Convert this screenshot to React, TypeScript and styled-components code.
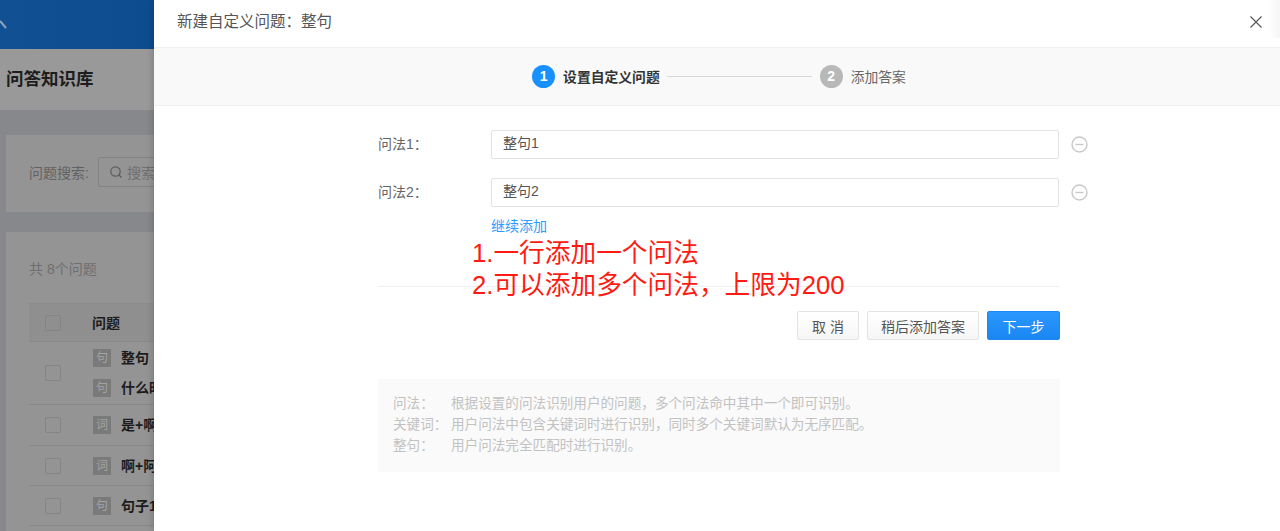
import React from 'react'
import styled, { createGlobalStyle } from 'styled-components'

const GlobalStyle = createGlobalStyle`
  html, body {
    margin: 0;
    padding: 0;
    background: #fff;
  }
  body {
    font-family: "Liberation Sans", "Noto Sans CJK SC", sans-serif;
  }
`

const rows = [
  { height: 63, items: [{ tag: '句', text: '整句' }, { tag: '句', text: '什么时' }] },
  { height: 41, items: [{ tag: '词', text: '是+啊' }] },
  { height: 40, items: [{ tag: '词', text: '啊+阿' }] },
  { height: 40, items: [{ tag: '句', text: '句子1' }] },
]

const hints = [
  { label: '问法\uFF1A', text: '根据设置的问法识别用户的问题\uFF0C多个问法命中其中一个即可识别。' },
  { label: '关键词\uFF1A', text: '用户问法中包含关键词时进行识别\uFF0C同时多个关键词默认为无序匹配。' },
  { label: '整句\uFF1A', text: '用户问法完全匹配时进行识别。' },
]

export default function App() {
  return (
    <>
      <GlobalStyle />
      <Screen>
        <Backdrop>
          <TopBar>
            <svg width='8' height='10' viewBox='0 0 8 10'>
              <path d='M0 1 L6 8' fill='none' stroke='#8fa5be' strokeWidth='2' />
            </svg>
          </TopBar>
          <TitleBand>问答知识库</TitleBand>
          <Content>
            <SearchCard>
              <SearchLabel>问题搜索:</SearchLabel>
              <SearchBox>
                <svg width='14' height='14' viewBox='0 0 14 14'>
                  <circle cx='6.5' cy='6.5' r='4.7' fill='none' stroke='#5c5c5c' strokeWidth='1.2' />
                  <path d='M10 10 L12.5 12.5' stroke='#5c5c5c' strokeWidth='1.2' />
                </svg>
                <span>搜索</span>
              </SearchBox>
            </SearchCard>
            <ListCard>
              <Count>共 8个问题</Count>
              <HeadRow>
                <Check />
                <HeadText>问题</HeadText>
              </HeadRow>
              {rows.map((row, i) => (
                <Row key={i} $height={row.height}>
                  <Check />
                  <RowItems>
                    {row.items.map((item) => (
                      <RowItem key={item.text}>
                        <Tag>{item.tag}</Tag>
                        <RowText>{item.text}</RowText>
                      </RowItem>
                    ))}
                  </RowItems>
                </Row>
              ))}
            </ListCard>
          </Content>
        </Backdrop>

        <Drawer>
          <EdgeShade />
          <DrawerHeader>
            <DrawerTitle>{'新建自定义问题\uFF1A整句'}</DrawerTitle>
            <CloseButton>
              <svg width='12' height='12' viewBox='0 0 12 12'>
                <path d='M0.5 0.5 L11.5 11.5 M11.5 0.5 L0.5 11.5' stroke='#595959' strokeWidth='1.2' />
              </svg>
            </CloseButton>
          </DrawerHeader>
          <Steps>
            <StepDot $active>1</StepDot>
            <StepLabel $active>设置自定义问题</StepLabel>
            <StepLine />
            <StepDot>2</StepDot>
            <StepLabel>添加答案</StepLabel>
          </Steps>
          <Body>
            <Form>
              <FieldRow>
                <FieldLabel>{'问法1\uFF1A'}</FieldLabel>
                <FieldInput>整句1</FieldInput>
                <MinusIcon />
              </FieldRow>
              <FieldRow>
                <FieldLabel>{'问法2\uFF1A'}</FieldLabel>
                <FieldInput>整句2</FieldInput>
                <MinusIcon />
              </FieldRow>
              <AddLink>继续添加</AddLink>
              <Divider />
              <Note>
                <div>1.一行添加一个问法</div>
                <div>{'2.可以添加多个问法\uFF0C上限为200'}</div>
              </Note>
              <Buttons>
                <Button $width={62}>取 消</Button>
                <Button $width={112}>稍后添加答案</Button>
                <Button $width={73} $primary>下一步</Button>
              </Buttons>
              <HintBox>
                {hints.map((hint) => (
                  <HintRow key={hint.label}>
                    <HintLabel>{hint.label}</HintLabel>
                    <span>{hint.text}</span>
                  </HintRow>
                ))}
              </HintBox>
            </Form>
          </Body>
        </Drawer>
      </Screen>
    </>
  )
}

function MinusIcon() {
  return (
    <MinusWrap viewBox='0 0 17 17' width='17' height='17'>
      <circle cx='8.5' cy='8.5' r='7.5' fill='none' stroke='#c9c9c9' strokeWidth='1.4' />
      <path d='M4.5 8.5 H12.5' stroke='#c9c9c9' strokeWidth='1.4' />
    </MinusWrap>
  )
}

const Screen = styled.div`
  display: flex;
  width: 1280px;
  height: 531px;
  overflow: hidden;
`

const Backdrop = styled.div`
  display: flex;
  flex-direction: column;
  flex: 0 0 154px;
  width: 154px;
  overflow: hidden;
  background: #87888b;
`

const TopBar = styled.div`
  display: flex;
  flex: 0 0 49px;
  align-items: center;
  background: linear-gradient(90deg, #115092, #0d4c8e);
`

const TitleBand = styled.div`
  flex: 0 0 61px;
  padding-left: 6px;
  background: #999999;
  color: #1d1d1d;
  font-size: 17.5px;
  font-weight: 700;
  line-height: 61px;
  white-space: nowrap;
`

const Content = styled.div`
  display: flex;
  flex-direction: column;
  flex: 1;
  gap: 20px;
  padding: 25px 0 0 6px;
`

const SearchCard = styled.div`
  display: flex;
  flex: 0 0 77px;
  box-sizing: border-box;
  align-items: center;
  padding: 0 0 3px 23px;
  background: #949494;
  white-space: nowrap;
`

const SearchLabel = styled.span`
  margin-right: 9px;
  color: #626262;
  font-size: 14px;
`

const SearchBox = styled.div`
  display: flex;
  flex: 0 0 auto;
  align-items: center;
  gap: 4px;
  width: 120px;
  height: 28px;
  padding-left: 10px;
  border: 1px solid #838383;
  border-radius: 2px;
  color: #6f6f6f;
  font-size: 14px;
`

const ListCard = styled.div`
  flex: 1;
  padding-left: 23px;
  background: #949494;
  white-space: nowrap;
`

const Count = styled.div`
  height: 71px;
  padding-top: 27px;
  box-sizing: border-box;
  color: #6f6f6f;
  font-size: 14px;
  line-height: 20px;
`

const HeadRow = styled.div`
  display: flex;
  box-sizing: border-box;
  align-items: center;
  height: 39px;
  padding-left: 16px;
  border-top: 1px solid #8b8b8b;
  border-bottom: 1px solid #888888;
  background: #8f8f8f;
`

const Row = styled.div<{ $height: number }>`
  display: flex;
  box-sizing: border-box;
  align-items: center;
  height: ${(props) => props.$height}px;
  padding-left: 16px;
  border-bottom: 1px solid #888888;
`

const Check = styled.span`
  flex: 0 0 16px;
  box-sizing: border-box;
  width: 16px;
  height: 16px;
  margin-right: 32px;
  border: 1px solid #848484;
  border-radius: 2px;
`

const HeadText = styled.span`
  margin-left: -1px;
  padding-bottom: 2px;
  color: #1c1c1c;
  font-size: 14px;
  font-weight: 700;
`

const RowItems = styled.div`
  display: flex;
  flex-direction: column;
  gap: 12px;
`

const RowItem = styled.div`
  display: flex;
  align-items: center;
  gap: 10px;
  height: 18px;
`

const Tag = styled.span`
  width: 18px;
  height: 18px;
  background: #7a7a7a;
  color: #a3a3a3;
  font-size: 12px;
  line-height: 18px;
  text-align: center;
`

const RowText = styled.span`
  padding-bottom: 2px;
  color: #1c1c1c;
  font-size: 14px;
  font-weight: 700;
`

const Drawer = styled.div`
  position: relative;
  display: flex;
  flex-direction: column;
  flex: 1;
  background: #fff;
  box-shadow: -2px 0 6px rgba(0, 0, 0, 0.15);
`

const EdgeShade = styled.div`
  position: absolute;
  top: 0;
  right: 0;
  width: 12px;
  height: 38px;
  background: linear-gradient(90deg, #ffffff, #f6f6f6);
`

const DrawerHeader = styled.div`
  display: flex;
  flex: 0 0 48px;
  box-sizing: border-box;
  align-items: center;
  justify-content: space-between;
  padding: 0 18px 7px 23px;
  border-bottom: 1px solid #f0f0f0;
`

const DrawerTitle = styled.div`
  color: #555555;
  font-size: 15.5px;
`

const CloseButton = styled.span`
  display: flex;
  margin-top: 4px;
`

const Steps = styled.div`
  display: flex;
  flex: 0 0 58px;
  box-sizing: border-box;
  align-items: center;
  justify-content: center;
  padding-left: 4px;
  background: #f9f9f9;
  border-bottom: 1px solid #f0f0f0;
`

const StepDot = styled.span<{ $active?: boolean }>`
  width: 23px;
  height: 23px;
  margin-right: 8px;
  border-radius: 50%;
  background: ${(props) => (props.$active ? '#1890ff' : '#b8b8b8')};
  color: #fff;
  font-size: 14px;
  font-weight: 700;
  line-height: 23px;
  text-align: center;
`

const StepLabel = styled.span<{ $active?: boolean }>`
  padding-bottom: 2px;
  color: ${(props) => (props.$active ? '#333333' : '#666666')};
  font-size: 13.8px;
  font-weight: ${(props) => (props.$active ? 700 : 400)};
`

const StepLine = styled.span`
  width: 145px;
  height: 1px;
  margin: 0 8px 0 7px;
  background: #d9d9d9;
`

const Body = styled.div`
  flex: 1;
  padding: 24px 0 0 224px;
`

const Form = styled.div`
  position: relative;
  width: 682px;
`

const FieldRow = styled.div`
  display: flex;
  align-items: center;
  height: 29px;
  margin-bottom: 19px;
`

const FieldLabel = styled.span`
  flex: 0 0 113px;
  padding-bottom: 4px;
  color: #666666;
  font-size: 14px;
`

const FieldInput = styled.div`
  flex: 0 0 568px;
  box-sizing: border-box;
  height: 29px;
  padding-left: 11px;
  border: 1px solid #e3e3e3;
  border-radius: 2px;
  color: #555555;
  font-size: 14px;
  line-height: 25px;
`

const MinusWrap = styled.svg`
  flex: 0 0 17px;
  margin-left: 12px;
`

const AddLink = styled.div`
  margin: -10px 0 0 113px;
  color: #2e9bff;
  font-size: 14px;
  line-height: 20px;
`

const Divider = styled.div`
  width: 682px;
  height: 1px;
  margin-top: 50px;
  background: #f0f0f0;
`

const Note = styled.div`
  position: absolute;
  top: 107px;
  left: 94px;
  color: #ff1a12;
  font-size: 25.7px;
  line-height: 32px;
  white-space: nowrap;
`

const Buttons = styled.div`
  display: flex;
  justify-content: flex-end;
  gap: 8px;
  margin-top: 24px;
`

const Button = styled.button<{ $primary?: boolean; $width: number }>`
  width: ${(props) => props.$width}px;
  height: 29px;
  padding: 0;
  border: 1px solid ${(props) => (props.$primary ? '#1a88f5' : '#e3e3e3')};
  border-radius: 2px;
  background: ${(props) =>
    props.$primary ? 'linear-gradient(#2b98ff, #1a86f2)' : 'linear-gradient(#ffffff, #f6f6f6)'};
  color: ${(props) => (props.$primary ? '#fff' : '#555555')};
  font-family: inherit;
  font-size: 14px;
`

const HintBox = styled.div`
  box-sizing: border-box;
  height: 93px;
  margin-top: 39px;
  padding: 14px 15px;
  background: #fafafa;
  color: #c2c2c2;
  font-size: 13.6px;
  line-height: 21px;
`

const HintRow = styled.div`
  display: flex;
  white-space: nowrap;
`

const HintLabel = styled.span`
  flex: 0 0 58px;
`
